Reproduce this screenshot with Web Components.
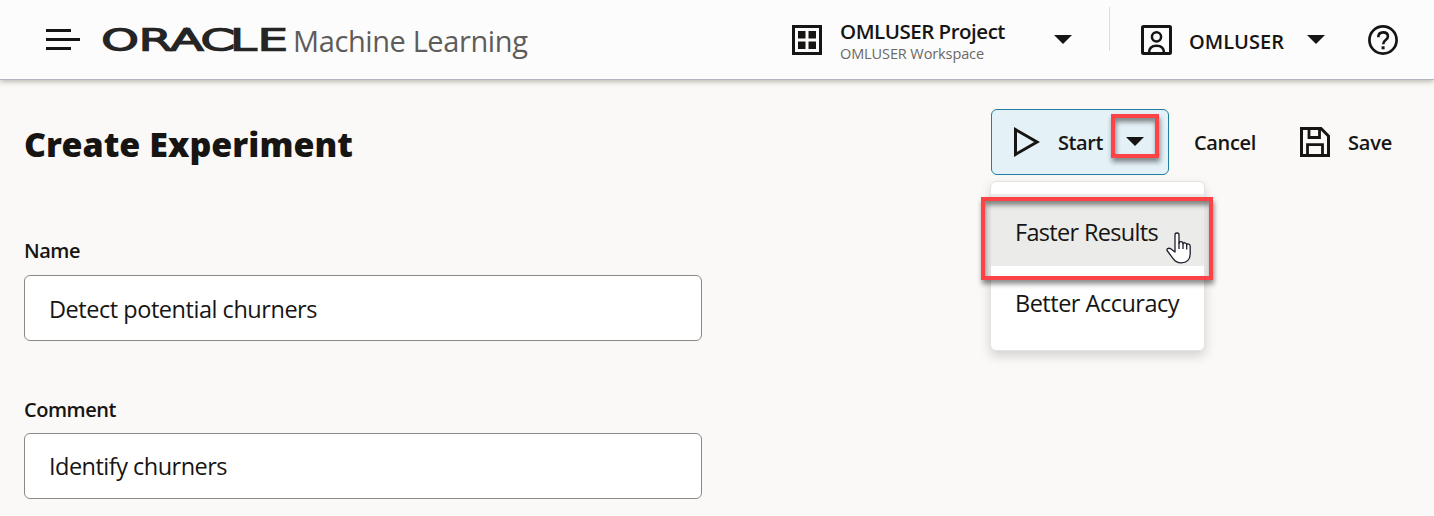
<!DOCTYPE html>
<html lang="en">
<head>
<meta charset="utf-8">
<title>Create Experiment</title>
<style>
html,body{margin:0;height:100%;overflow:hidden}
body{background:#faf9f7;color:#161513;font-family:"Open Sans","Noto Sans",sans-serif}
</style>
</head>
<body>
<oml-app></oml-app>
<script>
const define = (name, html, init) => customElements.define(name, class extends HTMLElement {
  connectedCallback() {
    if (this.shadowRoot) return;
    const t = document.createElement('template');
    t.innerHTML = html;
    this.attachShadow({mode:'open'}).appendChild(t.content.cloneNode(true));
    if (init) init.call(this, this.shadowRoot);
  }
});

// A run of text tracked so that it fills the width given in "w".
define('oml-text', `<style>:host{display:block;white-space:nowrap;flex:none}span{display:inline-block}</style><span><slot></slot></span>`, function (root) {
  const span = root.querySelector('span');
  const w = parseFloat(this.getAttribute('w'));
  const natural = span.getBoundingClientRect().width;
  span.style.letterSpacing = (w - natural) / this.textContent.length + 'px';
  this.style.width = w + 'px';
});

const icons = {
  menu: [34,24,'<path d="M0 2.5h25M0 11.5h34M0 20.5h25" stroke="currentColor" stroke-width="3"/>'],
  project: [30,30,'<path d="M1.5 1.5h27v27h-27z" fill="none" stroke="currentColor" stroke-width="3"/><path d="M6 6h7.5v7.5H6zM16.5 6H24v7.5h-7.5zM6 16.5h7.5V24H6zM16.5 16.5H24V24h-7.5z" fill="currentColor"/>'],
  user: [31,30,'<rect x="1.5" y="1.5" width="28" height="27" rx="1" fill="none" stroke="currentColor" stroke-width="3"/><circle cx="15.5" cy="11.8" r="4.6" fill="none" stroke="currentColor" stroke-width="2.5"/><path d="M8 28C8 23 11 20.8 15.5 20.8S23 23 23 28" fill="none" stroke="currentColor" stroke-width="2.6"/>'],
  caret: [18,9,'<path d="M0 0h18L9 9z" fill="currentColor"/>'],
  help: [30,30,'<circle cx="15" cy="15" r="13.6" fill="none" stroke="currentColor" stroke-width="2.7"/><path d="M10.3 12.2C10.3 8.8 12.4 7.4 15.1 7.4c2.8 0 4.8 1.6 4.8 4.1 0 3.7-4.7 3.5-4.7 7.7" fill="none" stroke="currentColor" stroke-width="2.6"/><path d="M13.6 21.3h3v3h-3z" fill="currentColor"/>'],
  play: [26,30,'<path d="M1.5 2.6v24.8L23 15z" fill="none" stroke="currentColor" stroke-width="3"/>'],
  save: [30,30,'<path d="M1.500 1.500H21L28.500 9v19.500h-27z" fill="none" stroke="currentColor" stroke-width="3"/><path d="M9 2v8.500h10.500V2M7.500 28V17.700h15V28" fill="none" stroke="currentColor" stroke-width="2.800"/>'],
  hand: [26,32,'<path d="M9 20V2.8c0-2.4 4-2.4 4 0V11c.4-2 4-1.7 4 .8.6-1.7 3.7-1.3 3.7 1 .7-1.4 3.500-1 3.500 1.400v7.300c0 6-3.200 9.300-9 9.300-4.900 0-6.900-2.400-8.700-5L1.400 19c-1.500-2 1.300-3.600 3.300-2.200z" fill="#fff" stroke="#201c2b" stroke-width="1.300" stroke-linejoin="round"/><path d="M13 10v7M17 11.500V17M20.700 12.500V17.500" stroke="#201c2b" stroke-width="1.300"/>']
};
define('oml-icon', `<style>:host{display:block;flex:none}svg{display:block}</style><div></div>`, function (root) {
  const [w, h, body] = icons[this.getAttribute('name')];
  root.querySelector('div').innerHTML = `<svg width="${w}" height="${h}" viewBox="0 0 ${w} ${h}">${body}</svg>`;
});

define('oml-brand', `<style>
:host{display:flex;align-items:center}
svg{display:block;margin:1px 0 0 22px;overflow:visible}
text{font:200 28.500px "DejaVu Sans","DejaVu Sans Light",sans-serif;fill:#252525;stroke:#252525;stroke-width:3.4;vector-effect:non-scaling-stroke}
oml-text{font-size:29px;line-height:40px;color:#5e5c5a;margin:3px 0 0 6px}
</style><oml-icon name="menu"></oml-icon>
<svg width="185" height="26" viewBox="0 0 185 26"><text transform="scale(1.7 1)" x="-.6 21.400 40.2 57.8 75.300 91.400" y="23.300">ORACLE</text></svg>
<oml-text w="234.500">Machine Learning</oml-text>`);

define('oml-header', `<style>
:host{display:flex;align-items:center;box-sizing:border-box;height:80px;padding:0 36px 0 46px;background:#fcfcfc;border-bottom:1px solid #b5b6bf;box-shadow:0 1px 6px rgba(60,45,35,.4)}
.sp{flex:1}
.proj{margin:3px 49px 0 18px;width:165px}
.p{font-size:20.500px;line-height:25px;font-weight:540}
.w{font-size:14.500px;line-height:20px;color:#6a6865}
.line{width:1px;height:44px;background:#dedddc;margin:0 31px 21px 37px}
.u{font-size:20px;line-height:26px;font-weight:540;margin:4px 23px 0 17px}
.help{margin-left:43px}
</style>
<oml-brand></oml-brand><div class="sp"></div>
<oml-icon name="project"></oml-icon>
<div class="proj"><oml-text class="p" w="165">OMLUSER Project</oml-text><oml-text class="w" w="144">OMLUSER Workspace</oml-text></div>
<oml-icon name="caret"></oml-icon><div class="line"></div>
<oml-icon name="user"></oml-icon><oml-text class="u" w="95">OMLUSER</oml-text><oml-icon name="caret"></oml-icon><oml-icon class="help" name="help"></oml-icon>`);

define('oml-callout', `<style>:host{display:block;position:absolute;box-sizing:border-box;border:4px solid #fd4345;box-shadow:1px 4px 5px rgba(0,0,0,.45),inset 1px 4px 5px rgba(0,0,0,.45);pointer-events:none}</style>`);

define('oml-menu-item', `<style>:host{display:block;box-sizing:border-box;height:72px;padding:3px 0 0 24px;font-size:23.500px;line-height:69px}:host([active]){padding-top:4px;background:#ebebe9}</style><slot></slot>`);

define('oml-menu', `<style>
:host{display:block;position:absolute;left:-2px;top:71px;width:215px;height:170px;box-sizing:border-box;padding-top:12px;background:#fff;border:1px solid #e4e3e1;border-radius:6px;box-shadow:0 5px 12px rgba(0,0,0,.16);font-weight:400}
oml-callout{left:-10px;top:15px;width:232px;height:83px}
.hand{position:absolute;left:175px;top:50px}
</style>
<oml-menu-item active><oml-text w="143">Faster Results</oml-text></oml-menu-item>
<oml-menu-item><oml-text w="164">Better Accuracy</oml-text></oml-menu-item>
<oml-callout></oml-callout><oml-icon class="hand" name="hand"></oml-icon>`);

define('oml-start', `<style>
:host{display:flex;position:relative;align-items:center;box-sizing:border-box;width:178px;height:66px;padding-left:22px;border:1px solid #227e9e;border-radius:6px;background:#e4f1f7}
oml-text{margin:1px 23px 0 18px}
oml-callout{left:119px;top:4px;width:48px;height:44px}
.c{margin-top:-1px}
</style><oml-icon name="play"></oml-icon><oml-text w="45">Start</oml-text><oml-icon class="c" name="caret"></oml-icon>
<oml-callout></oml-callout><oml-menu></oml-menu>`);

define('oml-toolbar', `<style>
:host{display:flex;align-items:center;justify-content:space-between;height:66px}
h1{margin:3px 0 0;font:900 34px/66px "Noto Sans","Open Sans",sans-serif}
.actions{display:flex;align-items:center;width:419px;font-size:20px;line-height:26px;font-weight:540}
.cancel{margin:1px 44px 0 25px}.save{margin:1px 0 0 18px}
</style><h1><oml-text w="329">Create Experiment</oml-text></h1>
<div class="actions"><oml-start></oml-start><oml-text class="cancel" w="62">Cancel</oml-text><oml-icon name="save"></oml-icon><oml-text class="save" w="44">Save</oml-text></div>`);

define('oml-field', `<style>
:host{display:block;width:678px}
.label{box-sizing:border-box;height:37px;padding-top:var(--label-drop,1px);font-size:20px;line-height:24px;font-weight:540}
.box{box-sizing:border-box;height:66px;padding:var(--value-drop,2px) 24px 0;border:1px solid #8b8986;border-radius:6px;background:#fff;font-size:23.500px;line-height:63px}
</style><div class="label"><slot name="label"></slot></div><div class="box"><slot></slot></div>`);

define('oml-app', `<style>
:host{display:block}
main{padding:29px 24px 0}
oml-toolbar{margin-bottom:63px}
oml-field + oml-field{margin-top:55px;--label-drop:2px;--value-drop:1px}
</style><oml-header></oml-header><main><oml-toolbar></oml-toolbar>
<oml-field><oml-text slot="label" w="56">Name</oml-text><oml-text w="268">Detect potential churners</oml-text></oml-field>
<oml-field><oml-text slot="label" w="92">Comment</oml-text><oml-text w="178">Identify churners</oml-text></oml-field></main>`);
</script>
</body>
</html>
